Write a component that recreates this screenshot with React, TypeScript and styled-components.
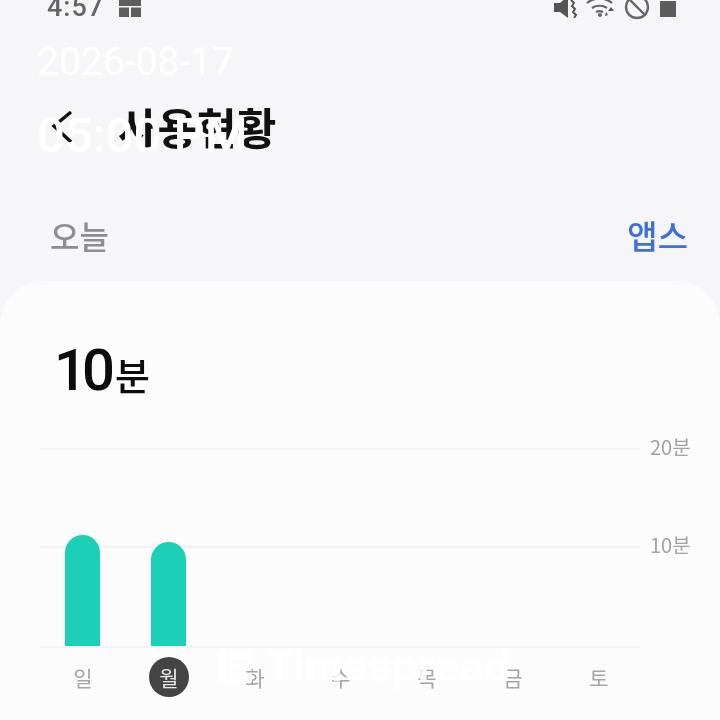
import styled, { createGlobalStyle } from "styled-components";

const GlobalStyle = createGlobalStyle`
  html, body {
    margin: 0;
    padding: 0;
    background: #f6f6f8;
  }
`;

const days = ["일", "월", "화", "수", "목", "금", "토"];
const bars = [111, 104, 0, 0, 0, 0, 0];

const App = () => {
  return (
    <Screen>
      <GlobalStyle />
      <Page>
        <StatusBar>
          <StatusLeft>
            <Clock>4:57</Clock>
            <svg width="22" height="17" viewBox="0 0 22 17">
              <path d="M0 0h22v6H0z M0 7.500h10v9.500H0z M12 7.500h10v9.500H12z" fill="#5e5e5e" />
            </svg>
          </StatusLeft>
          <StatusRight>
            <svg width="24" height="20" viewBox="0 0 24 20">
              <path d="M0 3h6l8-7v22l-8-6H0z" fill="#555" />
              <path d="M17 0l3 3-2 3 3 3-2 3 3 3-2 3" stroke="#555" strokeWidth="2" fill="none" />
            </svg>
            <svg width="30" height="20" viewBox="0 0 30 20">
              <path d="M1 3C8-3 19-3 26 3M6 8c4-3 11-3 15 0M10 12c2-1 5-1 7 0" stroke="#666" strokeWidth="2.200" fill="none" />
              <circle cx="14" cy="15" r="2" fill="#666" />
              <path d="M25 7l3 4h-6zM20 12l2 3-3 1z" fill="#555" />
            </svg>
            <svg width="26" height="20" viewBox="0 0 26 20">
              <circle cx="13" cy="7" r="11" stroke="#666" strokeWidth="2.400" fill="none" />
              <path d="M5 -1L21 15" stroke="#666" strokeWidth="2.400" />
            </svg>
            <BatteryBlock />
          </StatusRight>
        </StatusBar>

        <TitleRow>
          <svg width="24" height="40" viewBox="0 0 24 40">
            <path d="M21 4L4 18l17 16" stroke="#111" strokeWidth="3.400" fill="none" />
          </svg>
          <Title>사용현황</Title>
        </TitleRow>

        <TabRow>
          <TodayLabel>오늘</TodayLabel>
          <AppsLabel>앱스</AppsLabel>
        </TabRow>

        <Card>
          <Total>
            10<TotalUnit>분</TotalUnit>
          </Total>
          <Chart>
            <Plot>
              <GridLine $top={0}>
                <AxisLabel>20분</AxisLabel>
              </GridLine>
              <GridLine $top={98}>
                <AxisLabel>10분</AxisLabel>
              </GridLine>
              <Bars>
                {bars.map((h, i) => (
                  <BarSlot key={i}>{h > 0 && <Bar style={{ height: h }} />}</BarSlot>
                ))}
              </Bars>
            </Plot>
            <DayRow>
              {days.map((d, i) => (
                <Day key={d} $active={i === 1}>
                  {d}
                </Day>
              ))}
            </DayRow>
          </Chart>
        </Card>
      </Page>

      <DateStamp>2026-08-17</DateStamp>
      <TimeStamp>05:00 PM</TimeStamp>
      <Watermark>
        <svg width="33" height="31" viewBox="0 0 34 32">
          <path d="M0 0h7v32H0z M10 0h24v9H10z M10 12h24v8H10z M10 23h24v9H10z" fill="#fff" />
        </svg>
        <span>Timespread</span>
      </Watermark>
    </Screen>
  );
};

export default App;

const kr = `"Noto Sans CJK KR", "Noto Sans", sans-serif`;

const Screen = styled.div`
  position: relative;
  width: 720px;
  height: 720px;
  overflow: hidden;
  background: #f6f6f8;
  font-family: ${kr};
`;

const Page = styled.div`
  height: 720px;
  filter: blur(0.6px);
`;

const StatusBar = styled.div`
  height: 21px;
  display: flex;
  justify-content: space-between;
  align-items: flex-start;
  padding: 0 44px 0 47px;
  overflow: hidden;
`;

const StatusLeft = styled.div`
  display: flex;
  align-items: flex-start;
  gap: 15px;
  margin-top: -6px;

  svg {
    margin-top: 6px;
  }
`;

const Clock = styled.span`
  font-family: "Roboto", sans-serif;
  font-size: 27px;
  font-weight: 500;
  line-height: 26px;
  color: #666;
  letter-spacing: 1px;
`;

const StatusRight = styled.div`
  display: flex;
  align-items: flex-start;
  gap: 8px;
`;

const BatteryBlock = styled.div`
  width: 16px;
  height: 16px;
  margin: 1px 0 0 2px;
  background: #5c5c5c;
`;

const TitleRow = styled.div`
  height: 60px;
  margin-top: 77px;
  display: flex;
  align-items: center;
  gap: 44px;
  padding-left: 50px;
`;

const Title = styled.h1`
  margin: -4px 0 0;
  font-size: 43px;
  font-weight: 700;
  color: #111;
`;

const TabRow = styled.div`
  height: 60px;
  margin-top: 47px;
  display: flex;
  justify-content: space-between;
  align-items: center;
  padding: 0 32px 0 50px;
`;

const TodayLabel = styled.span`
  font-size: 32px;
  font-weight: 500;
  color: #8e8e90;
`;

const AppsLabel = styled.span`
  font-size: 33px;
  font-weight: 500;
  color: #3d70d8;
`;

const Card = styled.div`
  margin-top: 16px;
  height: 440px;
  background: #fcfcfc;
  border-radius: 44px 44px 0 0;
  padding: 54px 0 0 40px;
`;

const Total = styled.div`
  font-family: "Roboto", sans-serif;
  font-size: 58px;
  font-weight: 500;
  line-height: 70px;
  letter-spacing: -5px;
  color: #0c0c0c;
  padding-left: 14px;
`;

const TotalUnit = styled.span`
  font-family: ${kr};
  font-size: 38px;
  font-weight: 500;
  letter-spacing: 0;
  margin-left: 5px;
`;

const Chart = styled.div`
  width: 600px;
  margin-top: 39px;
`;

const Plot = styled.div`
  position: relative;
  height: 198px;
  border-bottom: 2px solid #f2f2f2;
`;

const GridLine = styled.div<{ $top: number }>`
  position: absolute;
  left: 0;
  right: 0;
  top: ${({ $top }) => $top}px;
  border-top: 2px solid #f2f2f2;
`;

const AxisLabel = styled.span`
  position: absolute;
  left: 610px;
  top: -17px;
  white-space: nowrap;
  font-size: 20px;
  line-height: 28px;
  color: #a3a3a3;
`;

const Bars = styled.div`
  position: absolute;
  inset: 0;
  display: grid;
  grid-template-columns: repeat(7, 86px);
  align-items: end;
`;

const BarSlot = styled.div`
  display: flex;
  justify-content: center;
  padding-right: 2px;
`;

const Bar = styled.div`
  width: 35px;
  background: #1bd0b6;
  border-radius: 18px 18px 0 0;
`;

const DayRow = styled.div`
  display: grid;
  grid-template-columns: repeat(7, 86px);
  margin-top: 9px;
`;

const Day = styled.div<{ $active: boolean }>`
  justify-self: center;
  width: 40px;
  height: 40px;
  border-radius: 50%;
  display: flex;
  align-items: center;
  justify-content: center;
  font-size: 21px;
  color: ${({ $active }) => ($active ? "#e8e8e8" : "#a6a6a6")};
  background: ${({ $active }) => ($active ? "#444" : "transparent")};
`;

const DateStamp = styled.div`
  position: absolute;
  left: 37px;
  top: 41px;
  font-family: "Roboto", sans-serif;
  font-size: 39px;
  line-height: 42px;
  color: #fff;
`;

const TimeStamp = styled.div`
  position: absolute;
  left: 37px;
  top: 108px;
  font-family: "Roboto", sans-serif;
  font-size: 49px;
  font-weight: 500;
  line-height: 56px;
  color: #fff;
  white-space: nowrap;
`;

const Watermark = styled.div`
  position: absolute;
  left: 219px;
  top: 644px;
  display: flex;
  align-items: center;
  gap: 13px;
  font-family: "Inter", sans-serif;
  font-size: 42px;
  font-weight: 700;
  line-height: 44px;
  color: #fff;
  opacity: 0.85;
  white-space: nowrap;
`;
